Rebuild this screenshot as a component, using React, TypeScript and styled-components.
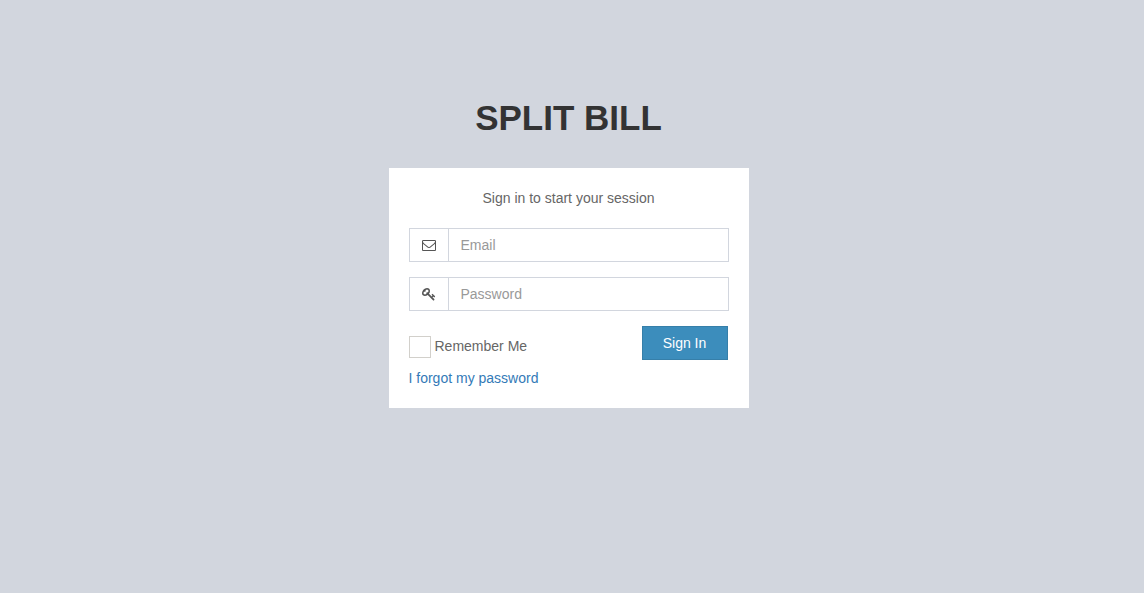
import React from "react";
import styled, { createGlobalStyle } from "styled-components";

const GlobalStyle = createGlobalStyle`
  *, *::before, *::after { box-sizing: border-box; }
  body {
    margin: 0;
    min-height: 100vh;
    background: #d2d6de;
    color: #333;
    font-family: "Liberation Sans", Arial, sans-serif;
    font-size: 14px;
    line-height: 20px;
  }
`;

const Page = styled.main`
  display: flex;
  justify-content: center;
  padding: 92px 7px 20px 0;
`;

const LoginBox = styled.div`
  width: 360px;
  max-width: 90%;
`;

const Logo = styled.h1`
  margin: 0 0 25px;
  font-size: 35px;
  line-height: 51px;
  font-weight: 700;
  text-align: center;
`;

const Panel = styled.form`
  padding: 20px;
  background: #fff;
  color: #666;
`;

const Message = styled.p`
  margin: 0 0 20px;
  text-align: center;
`;

const InputGroup = styled.div`
  display: flex;
  height: 34px;
  margin-bottom: 15px;
  border: 1px solid #d2d6de;
`;

const Addon = styled.label`
  display: flex;
  align-items: center;
  justify-content: center;
  width: 39px;
  border-right: 1px solid #d2d6de;
  color: #555;
`;

const Field = styled.input`
  flex: 1;
  min-width: 0;
  padding: 0 12px;
  border: 0;
  outline: 0;
  color: #555;
  font: inherit;
  &::placeholder { color: #999; opacity: 1; }
`;

const Actions = styled.div`
  display: flex;
  justify-content: space-between;
  align-items: flex-start;
`;

const Remember = styled.label`
  display: flex;
  align-items: flex-start;
  gap: 4px;
  padding-top: 10px;
`;

const Checkbox = styled.input`
  appearance: none;
  width: 22px;
  height: 22px;
  margin: 0;
  border: 1px solid #d2d0cb;
  background: #fff;
  &:checked { background: #3c8dbc; }
`;

const SubmitButton = styled.button`
  width: 86px;
  height: 34px;
  margin-right: 1px;
  border: 1px solid #367fa9;
  background: #3c8dbc;
  color: #fff;
  font: inherit;
  cursor: pointer;
`;

const ForgotLink = styled.a`
  display: inline-block;
  margin-top: 8px;
  color: #337ab7;
  text-decoration: none;
`;

const Icon = styled.svg`
  width: 14px;
  height: 14px;
  fill: currentColor;
`;

function EnvelopeIcon() {
  return (
    <Icon viewBox="0 0 1792 1792" aria-hidden="true">
      <path d="M1664 1504v-768q-32 36-69 66-268 206-426 338-51 43-83 67t-86.5 48.5-102.5 24.5h-2q-48 0-102.5-24.5t-86.5-48.5-83-67q-158-132-426-338-37-30-69-66v768q0 13 9.5 22.5t22.5 9.5h1472q13 0 22.5-9.5t9.5-22.5zm0-1051v-24.5l-.5-13-3-12.5-5.5-9-9-7.5-14-2.5h-1472q-13 0-22.5 9.5t-9.5 22.5q0 168 147 284 193 152 401 317 6 5 35 29.5t46 37.5 44.5 31.5 50.5 27.5 43 9h2q20 0 43-9t50.5-27.5 44.5-31.5 46-37.5 35-29.5q208-165 401-317 54-43 100.5-115.5t46.5-131.5zm128-37v1088q0 66-47 113t-113 47h-1472q-66 0-113-47t-47-113v-1088q0-66 47-113t113-47h1472q66 0 113 47t47 113z" />
    </Icon>
  );
}

function KeyIcon() {
  return (
    <Icon viewBox="0 0 1792 1792" aria-hidden="true">
      <path d="M832 512q0-80-56-136t-136-56-136 56-56 136q0 42 19 83-41-19-83-19-80 0-136 56t-56 136 56 136 136 56 136-56 56-136q0-42-19-83 41 19 83 19 80 0 136-56t56-136zm851 704q0 17-49 66t-66 49q-9 0-28.5-16t-36.5-33-38.5-40-24.5-26l-96 96 220 220q28 28 28 68 0 42-39 81t-81 39q-40 0-68-28l-671-671q-176 131-365 131-163 0-265.5-102.5t-102.5-265.5q0-160 95-313t248-248 313-95q163 0 265.5 102.5t102.5 265.5q0 189-131 365l355 355 96-96q-3-3-26-24.5t-40-38.5-33-36.5-16-28.5q0-17 49-66t66-49q13 0 23 10 6 6 46 44.5t82 79.5 86.5 86 73 78 28.5 41z" />
    </Icon>
  );
}

export default function App() {
  return (
    <>
      <GlobalStyle />
      <Page>
        <LoginBox>
          <Logo>SPLIT BILL</Logo>
          <Panel onSubmit={(e) => e.preventDefault()}>
            <Message>Sign in to start your session</Message>
            <InputGroup>
              <Addon htmlFor="email" aria-label="Email"><EnvelopeIcon /></Addon>
              <Field id="email" type="email" placeholder="Email" />
            </InputGroup>
            <InputGroup>
              <Addon htmlFor="password" aria-label="Password"><KeyIcon /></Addon>
              <Field id="password" type="password" placeholder="Password" />
            </InputGroup>
            <Actions>
              <Remember><Checkbox type="checkbox" />Remember Me</Remember>
              <SubmitButton type="submit">Sign In</SubmitButton>
            </Actions>
            <ForgotLink href="#forgot">I forgot my password</ForgotLink>
          </Panel>
        </LoginBox>
      </Page>
    </>
  );
}
